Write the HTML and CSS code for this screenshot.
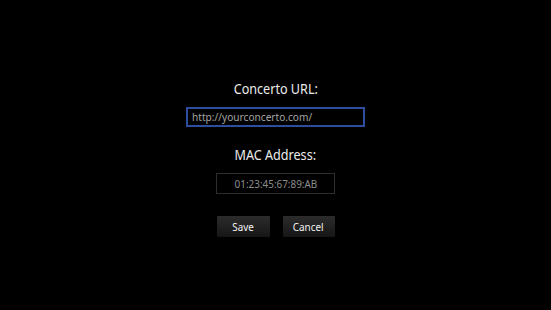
FILE: index.html
```html
<!DOCTYPE html>
<html>
<head>
<meta charset="utf-8">
<link rel="stylesheet" href="styles.css">
</head>
<body>
<div class="form">
  <div class="label"><span class="txt">Concerto URL:</span></div>
  <div class="url-field"><span class="txt txt-left">http://yourconcerto.com/</span></div>
  <div class="label label-mac"><span class="txt">MAC Address:</span></div>
  <div class="mac-field"><span class="txt">01:23:45:67:89:AB</span></div>
  <div class="buttons">
    <div class="btn btn-save"><span class="txt">Save</span></div>
    <div class="btn btn-cancel"><span class="txt">Cancel</span></div>
  </div>
</div>
</body>
</html>
```
FILE: styles.css
```css
html, body {
  margin: 0;
  padding: 0;
  background: #000;
  width: 551px;
  height: 310px;
  overflow: hidden;
}
body {
  font-family: "Noto Sans", "Open Sans", sans-serif;
  color: #e8e8e8;
}
.txt {
  display: inline-block;
  transform: scaleX(0.9);
  white-space: nowrap;
}
.txt-left {
  transform-origin: left center;
  transform: scaleX(0.88);
}
.form {
  display: flex;
  flex-direction: column;
  align-items: center;
  padding-top: 81px;
}
.label {
  font-size: 14px;
  line-height: 16px;
  height: 16px;
  color: #ececec;
  text-align: center;
}
.url-field {
  margin-top: 10px;
  box-sizing: border-box;
  width: 179px;
  height: 20px;
  border: 2px solid #2f4d9e;
  font-size: 11.5px;
  line-height: 16px;
  padding-left: 4px;
  color: #a4a4a4;
}
.label-mac {
  margin-top: 20px;
}
.mac-field {
  margin-top: 10px;
  box-sizing: border-box;
  width: 119px;
  height: 21px;
  border: 1px solid #2e2e2e;
  font-size: 11px;
  line-height: 19px;
  text-align: center;
  color: #8e8e8e;
}
.buttons {
  margin-top: 22px;
  display: flex;
  gap: 13px;
}
.btn {
  box-sizing: border-box;
  height: 21px;
  font-size: 11px;
  line-height: 21px;
  text-align: center;
  color: #f2f2f2;
  background: linear-gradient(#2c2c2c, #161616);
  border-radius: 1px;
}
.btn-save { width: 53px; }
.btn-cancel { width: 52px; }
```
